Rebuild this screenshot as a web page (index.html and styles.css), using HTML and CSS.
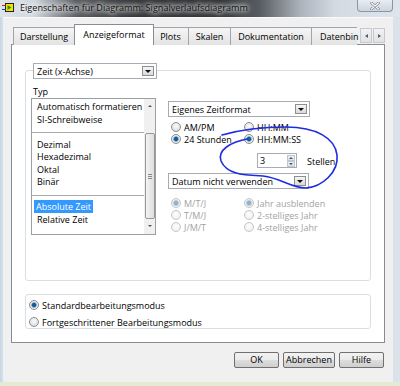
FILE: index.html
```html
<!DOCTYPE html>
<html lang="de">

<head>
  <meta charset="UTF-8">
  <title>Eigenschaften für Diagramm</title>
  <link rel="stylesheet" href="styles.css">
</head>

<body>
  <div class="window">
    <div class="titlebar">
      <svg class="app-icon" width="12" height="9" viewBox="0 0 12 9">
        <rect x="3.5" y="0.5" width="8" height="8" fill="#f5e200" stroke="#222" />
        <line x1="0" y1="2.5" x2="4" y2="2.5" stroke="#d41b1b" />
        <line x1="0" y1="6.5" x2="4" y2="6.5" stroke="#1b3fd4" />
        <path d="M5.5 2 L9.5 4.5 L5.5 7 Z" fill="#2f8f36" />
      </svg>
      <span class="title">Eigenschaften für Diagramm: Signalverlaufsdiagramm</span>
      <div class="close">
        <svg width="10" height="8" viewBox="0 0 10 8">
          <path d="M1.5 1 L8.5 7 M8.5 1 L1.5 7" stroke="#7d8590" stroke-width="2.6" stroke-linecap="round" />
          <path d="M1.5 1 L8.5 7 M8.5 1 L1.5 7" stroke="#fbfcfd" stroke-width="1.2" stroke-linecap="round" />
        </svg>
      </div>
    </div>

    <div class="client">
      <div class="tabs">
        <div class="tab tab-first">Darstellung</div>
        <div class="tab active">Anzeigeformat</div>
        <div class="tab">Plots</div>
        <div class="tab">Skalen</div>
        <div class="tab">Dokumentation</div>
        <div class="tab tab-clipped">Datenbin</div>
        <div class="tab-scroll">
          <span class="scroll-btn"><i class="tri-left"></i></span>
          <span class="scroll-btn"><i class="tri-right"></i></span>
        </div>
      </div>

      <div class="panel">
        <div class="group format-group">
          <div class="combo group-head" style="width: 124px">
            <span class="combo-text">Zeit (x-Achse)</span>
            <span class="combo-btn"><i class="tri-down"></i></span>
          </div>

          <div class="format-body">
            <div class="type-col">
              <div class="label">Typ</div>
              <div class="listbox">
                <div class="list-items">
                  <div class="item">Automatisch formatieren</div>
                  <div class="item">SI-Schreibweise</div>
                  <div class="sep"></div>
                  <div class="item">Dezimal</div>
                  <div class="item">Hexadezimal</div>
                  <div class="item">Oktal</div>
                  <div class="item">Binär</div>
                  <div class="sep"></div>
                  <div class="item"><span class="selected">Absolute Zeit</span></div>
                  <div class="item">Relative Zeit</div>
                </div>
                <div class="scrollbar">
                  <span class="sb-arrow"><i class="tri-up-small"></i></span>
                  <span class="sb-thumb"><i class="grip"></i></span>
                  <span class="sb-arrow sb-down"><i class="tri-down-small"></i></span>
                </div>
              </div>
            </div>

            <div class="options-col">
              <div class="combo" style="width: 142px">
                <span class="combo-text">Eigenes Zeitformat</span>
                <span class="combo-btn"><i class="tri-down"></i></span>
              </div>

              <div class="radio-grid time-radios">
                <div class="radio">AM/PM</div>
                <div class="radio">HH:MM</div>
                <div class="radio on">24 Stunden</div>
                <div class="radio on">HH:MM:SS</div>
              </div>

              <div class="digits-row">
                <div class="numeric">
                  <span class="num-text">3</span>
                  <span class="spin">
                    <span class="spin-btn"><i class="tri-up-small"></i></span>
                    <span class="spin-btn"><i class="tri-down-small"></i></span>
                  </span>
                </div>
                <span class="digits-label">Stellen</span>
              </div>

              <div class="combo" style="width: 141px">
                <span class="combo-text">Datum nicht verwenden</span>
                <span class="combo-btn"><i class="tri-down"></i></span>
              </div>

              <div class="radio-grid date-radios">
                <div class="radio on disabled">M/T/J</div>
                <div class="radio on disabled">Jahr ausblenden</div>
                <div class="radio disabled">T/M/J</div>
                <div class="radio disabled">2-stelliges Jahr</div>
                <div class="radio disabled">J/M/T</div>
                <div class="radio disabled">4-stelliges Jahr</div>
              </div>
            </div>
          </div>
        </div>

        <div class="group mode-group">
          <div class="radio on">Standardbearbeitungsmodus</div>
          <div class="radio">Fortgeschrittener Bearbeitungsmodus</div>
        </div>
      </div>

      <div class="buttons">
        <div class="button btn-ok">OK</div>
        <div class="button btn-cancel">Abbrechen</div>
        <div class="button btn-help">Hilfe</div>
      </div>
    </div>
  </div>

  <!-- Markierung von Hand -->
  <svg class="annotation" width="400" height="386" viewBox="0 0 400 386">
    <path d="M222 135 C236 131 256 127 286 127 C316 127 335 138 337 155 C339 172 322 187 306 188 C291 188 281 178 263 176 C245 175 227 175 221 161 C217 150 231 142 247 139"
      fill="none" stroke="#1f2be0" stroke-width="1.6" stroke-linecap="round" />
  </svg>
</body>

</html>
```

FILE: styles.css
```css
body {
  margin: 0;
  width: 400px;
  height: 386px;
  overflow: hidden;
  font-family: "Open Sans", "Noto Sans", sans-serif;
  font-size: 9px;
  color: #000;
  position: relative;
}

.window {
  height: 386px;
  display: flex;
  flex-direction: column;
  background: linear-gradient(90deg, #c6d5e4 0, #d7e0ea 3px, #dbe2ea 100%);
  border-bottom: 4px solid #e5ebd2;
  box-sizing: border-box;
}

/* Titelleiste */
.titlebar {
  height: 17px;
  flex: none;
  display: flex;
  align-items: flex-start;
  padding-left: 2px;
  background: linear-gradient(90deg, #dde4ec 0, #cfd6de 35px, #5a5d61 75px, #333538 130px, #2f3134 220px, #595d62 260px, #aab2bb 300px, #d3dae2 335px, #dfe5ec 100%);
}

.app-icon {
  margin-top: 3px;
  flex: none;
}

.title {
  margin-left: 6px;
  line-height: 15px;
  font-size: 9.1px;
  color: #111;
  text-shadow: 0 0 4px #fff, 0 0 6px #fff, 0 0 8px rgba(255, 255, 255, 0.9);
  white-space: nowrap;
}

.close {
  margin-left: auto;
  margin-right: 7px;
  width: 36px;
  height: 12px;
  box-sizing: border-box;
  border: 1px solid #8c96a2;
  border-top: none;
  border-radius: 0 0 4px 4px;
  background: linear-gradient(#e8edf2, #cdd5de);
  display: flex;
  align-items: center;
  justify-content: center;
}

/* Client */
.client {
  flex: 1;
  margin: 0 7px 0 3px;
  padding: 7px 8px 0 8px;
  background: #f0f0f0;
  border-top: 1px solid #fafafa;
}

.tabs {
  display: flex;
  align-items: flex-end;
  height: 20px;
  padding-left: 2px;
  position: relative;
  z-index: 1;
}

.tab {
  height: 18px;
  box-sizing: border-box;
  border: 1px solid #a0a4ab;
  border-bottom: none;
  border-left: none;
  background: linear-gradient(#f5f5f5, #e3e3e3);
  padding: 0 6px;
  line-height: 17px;
  white-space: nowrap;
  text-align: center;
}

.tab-first {
  border-left: 1px solid #a0a4ab;
  width: 62px;
}

.tab.active {
  height: 21px;
  width: 80px;
  background: #fff;
  border: 1px solid #898c95;
  border-bottom: none;
  margin: 0 -1px 0 -1px;
  line-height: 19px;
  padding-bottom: 1px;
  position: relative;
}

.tab:nth-child(3) {
  width: 36px;
}

.tab:nth-child(4) {
  width: 42px;
}

.tab:nth-child(5) {
  width: 81px;
}

.tab-clipped {
  width: 45px;
  text-align: left;
  padding-left: 8px;
  padding-right: 0;
  border-right: none;
}

.tab-scroll {
  display: flex;
  margin-left: 2px;
  margin-bottom: 2px;
}

.scroll-btn {
  width: 12px;
  height: 15px;
  box-sizing: border-box;
  border: 1px solid #c6c9cf;
  background: linear-gradient(#f2f2f2, #e2e2e2);
  display: flex;
  align-items: center;
  justify-content: center;
  margin-left: 1px;
}

.tri-left {
  border-right: 3px solid #4d5e78;
  border-top: 2.5px solid transparent;
  border-bottom: 2.5px solid transparent;
}

.tri-right {
  border-left: 3px solid #4d5e78;
  border-top: 2.5px solid transparent;
  border-bottom: 2.5px solid transparent;
}

/* Registerseite */
.panel {
  background: #fff;
  border: 1px solid #898c95;
  margin-top: -1px;
  padding: 25px 13px 12px 13px;
  height: 299px;
  box-sizing: border-box;
}

.group {
  border: 1px solid #d5dfe5;
  border-radius: 3px;
}

.format-group {
  padding: 0 0 45px 5px;
}

.group-head {
  margin: -8px 0 0 2px;
}

.combo {
  height: 16px;
  box-sizing: border-box;
  border: 1px solid #a5acb5;
  background: #fff;
  display: flex;
  align-items: center;
}

.combo-text {
  flex: 1;
  padding-left: 3px;
  line-height: 13px;
  white-space: nowrap;
}

.combo-btn {
  width: 12px;
  height: 10px;
  margin-right: 2px;
  box-sizing: border-box;
  border: 1px solid #8e8f8f;
  background: linear-gradient(#f6f6f6, #dadada);
  display: flex;
  align-items: center;
  justify-content: center;
}

.tri-down {
  border-top: 3px solid #111;
  border-left: 3px solid transparent;
  border-right: 3px solid transparent;
}

.format-body {
  display: flex;
  align-items: flex-start;
  margin-top: 7px;
}

.label {
  line-height: 12px;
  padding-left: 2px;
}

.listbox {
  width: 125px;
  height: 137px;
  box-sizing: border-box;
  border: 1px solid #9a9ea5;
  display: flex;
}

.list-items {
  flex: 1;
  padding-top: 2px;
}

.item {
  height: 12.5px;
  line-height: 12.5px;
  padding-left: 5px;
  white-space: nowrap;
}

.sep {
  height: 12.5px;
  box-sizing: border-box;
  padding-top: 6px;
}

.sep::after {
  content: "";
  display: block;
  height: 1px;
  background: #a9a9a9;
}

.selected {
  background: #3399ff;
  color: #fff;
  padding: 0 2px;
  margin-left: -3px;
}

.scrollbar {
  width: 11px;
  background: #f0f0f0;
  display: flex;
  flex-direction: column;
  align-items: center;
}

.sb-arrow {
  height: 14px;
  display: flex;
  align-items: center;
  justify-content: center;
}

.sb-thumb {
  width: 10px;
  height: 86px;
  margin-top: 20px;
  box-sizing: border-box;
  border: 1px solid #979797;
  border-radius: 2px;
  background: linear-gradient(90deg, #f3f3f3, #dedede);
  display: flex;
  align-items: center;
  justify-content: center;
}

.grip {
  width: 4px;
  height: 5px;
  background: repeating-linear-gradient(#8a8a8a 0 1px, transparent 1px 2px);
}

.sb-down {
  margin-top: auto;
  margin-bottom: 1px;
}

.tri-up-small {
  border-bottom: 2.5px solid #555;
  border-left: 2.5px solid transparent;
  border-right: 2.5px solid transparent;
}

.tri-down-small {
  border-top: 2.5px solid #555;
  border-left: 2.5px solid transparent;
  border-right: 2.5px solid transparent;
}

.options-col {
  margin-left: 12px;
  padding-top: 15px;
}

.radio-grid {
  display: grid;
  grid-template-columns: 73px auto;
  padding-left: 3px;
}

.time-radios {
  margin-top: 4px;
}

.date-radios {
  margin-top: 8px;
}

.radio {
  display: flex;
  align-items: center;
  height: 12px;
  white-space: nowrap;
}

.radio::before {
  content: "";
  width: 10px;
  height: 10px;
  flex: none;
  box-sizing: border-box;
  border: 1px solid #8b8d8f;
  border-radius: 50%;
  background: radial-gradient(circle at 50% 40%, #fbfbfb 0, #e4e4e4 60%, #cfcfcf 100%);
  margin-right: 3px;
}

.radio.on::before {
  background: radial-gradient(circle, #1a5b91 0 1.6px, #4f8dc2 2.2px, #cfe0ee 3px, #ececec 3.6px);
}

.radio.disabled {
  color: #a3a3a3;
}

.radio.disabled::before {
  border-color: #c4c6c8;
  background: radial-gradient(circle at 50% 40%, #fdfdfd, #ededed);
}

.radio.on.disabled::before {
  background: radial-gradient(circle, #8fb2d1 0 1.6px, #b7cde0 2.4px, #f0f0f0 3.6px);
}

.digits-row {
  display: flex;
  align-items: center;
  margin: 8px 0 0 89px;
}

.numeric {
  width: 40px;
  height: 15px;
  box-sizing: border-box;
  border: 1px solid #a5acb5;
  display: flex;
  align-items: center;
}

.num-text {
  flex: 1;
  padding-left: 2px;
}

.spin {
  display: flex;
  flex-direction: column;
  margin-right: 1px;
}

.spin-btn {
  width: 8px;
  height: 6px;
  background: linear-gradient(#eef2f6, #d8e0e8);
  border: 1px solid #bfc8d2;
  box-sizing: border-box;
  display: flex;
  align-items: center;
  justify-content: center;
}

.spin-btn i {
  border-width: 2px;
}

.digits-label {
  margin-left: 10px;
  position: relative;
  top: 1px;
}

.digits-row + .combo {
  margin-top: 5px;
}

.mode-group {
  margin-top: 13px;
  padding: 4px 0 0 3px;
  height: 35px;
  box-sizing: border-box;
  display: flex;
  flex-direction: column;
  gap: 5px;
}

/* Schaltflächen */
.buttons {
  display: flex;
  justify-content: flex-end;
  gap: 4px;
  margin-top: 9px;
  padding-right: 1px;
}

.button {
  height: 16px;
  box-sizing: border-box;
  border: 1px solid #707070;
  border-radius: 2px;
  background: linear-gradient(#f2f2f2 0, #ebebeb 50%, #dddddd 51%, #cfcfcf 100%);
  text-align: center;
  line-height: 14px;
}

.btn-ok,
.btn-help {
  width: 45px;
}

.btn-cancel {
  width: 52px;
}

.annotation {
  position: absolute;
  left: 0;
  top: 0;
  pointer-events: none;
}
```
